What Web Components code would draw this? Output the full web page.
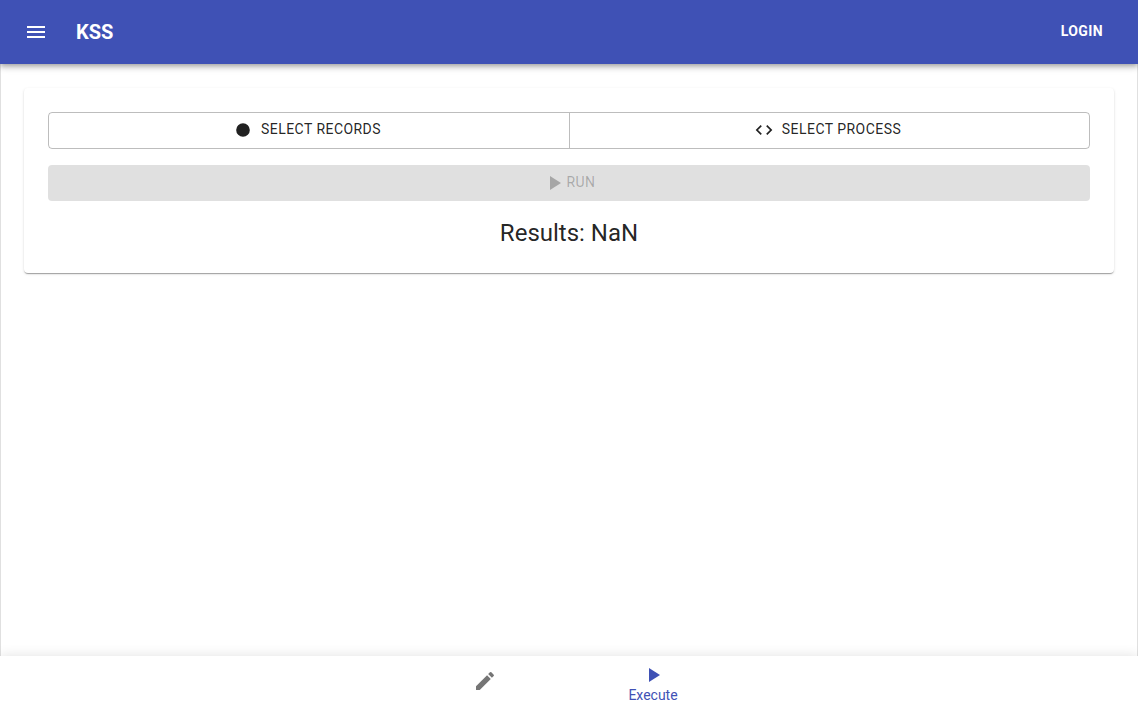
<!DOCTYPE html>
<html lang="en">
<head>
<meta charset="utf-8">
<title>KSS</title>
<style>
html, body { height: 100%; margin: 0; }
body { font-family: Roboto, "Liberation Sans", sans-serif; color: rgba(0,0,0,.87); background: #fff; overflow: hidden; }
</style>
</head>
<body>
<kss-app></kss-app>
<script>
const define = (name, html) => {
  const template = document.createElement('template');
  template.innerHTML = html;
  customElements.define(name, class extends HTMLElement {
    constructor() {
      super();
      this.attachShadow({ mode: 'open' }).append(template.content.cloneNode(true));
    }
  });
};

const icons = {
  menu: 'M3 18h18v-2H3v2zm0-5h18v-2H3v2zm0-7v2h18V6H3z',
  record: 'M12 3.8a8.2 8.2 0 1 0 0 16.4a8.2 8.2 0 1 0 0-16.4z',
  code: 'M9.4 16.6L4.8 12l4.6-4.6L8 6l-6 6 6 6 1.4-1.4zm5.2 0l4.6-4.6-4.6-4.6L16 6l6 6-6 6-1.4-1.4z',
  play: 'M8 5v14l11-7z',
  edit: 'M3 17.25V21h3.75L17.81 9.94l-3.75-3.75L3 17.25zM20.71 7.04c.39-.39.39-1.02 0-1.41l-2.34-2.34a.9959.9959 0 0 0-1.41 0l-1.83 1.83 3.75 3.75 1.83-1.83z'
};
customElements.define('kss-icon', class extends HTMLElement {
  connectedCallback() {
    if (this.shadowRoot) return;
    this.attachShadow({ mode: 'open' }).innerHTML = `
      <style>:host{display:block;flex:none;width:var(--size,24px);height:var(--size,24px)} svg{display:block;width:100%;height:100%;fill:currentColor}</style>
      <svg viewBox="0 0 24 24"><path d="${icons[this.getAttribute('name')]}"/></svg>`;
  }
});

define('kss-header', `
<style>
:host { display: flex; align-items: center; flex: none; height: 64px; box-sizing: border-box; padding: 0 24px; color: #fff; background: #3f51b5; z-index: 2;
  box-shadow: 0 2px 4px -1px rgba(0,0,0,.2), 0 4px 5px 0 rgba(0,0,0,.14), 0 1px 10px 0 rgba(0,0,0,.12); }
h1 { flex: 1; margin: 0 0 0 28px; font: 700 20px/32px Roboto, sans-serif; letter-spacing: 0; }
button { border: 0; background: none; color: inherit; padding: 5px 11px 7px; font: 700 14px/24px Roboto, sans-serif; letter-spacing: .02857em; }
</style>
<kss-icon name="menu"></kss-icon><h1>KSS</h1><button>LOGIN</button>`);

define('kss-button', `
<style>
:host { display: flex; align-items: center; justify-content: center; height: 36px; box-sizing: border-box; font-size: 14px; font-weight: 450; line-height: 24px; letter-spacing: .0325em; }
span { margin-left: var(--gap, 8px); position: relative; top: -1px; }
</style>
<slot name="icon"></slot><span><slot></slot></span>`);

define('kss-group', `
<style>
:host { display: grid; grid-template-columns: 521px 1fr; height: 37px; box-sizing: border-box; border: 1px solid rgba(0,0,0,.26); border-radius: 4px; }
::slotted(*) { height: 35px !important; padding: 0 4px 1px 0; }
::slotted(:first-child) { border-right: 1px solid rgba(0,0,0,.26); }
</style>
<slot></slot>`);

define('kss-card', `
<style>
:host { display: flex; flex-direction: column; gap: 16px; margin: 24px 23px; padding: 24px; border-radius: 4px; background: #fff;
  box-shadow: 0 2px 1px -1px rgba(0,0,0,.2), 0 1px 1px 0 rgba(0,0,0,.14), 0 1px 3px 0 rgba(0,0,0,.12); }
kss-icon { --size: 20px; }
.run { --gap: 0px; border-radius: 4px; color: rgba(0,0,0,.26); background: rgba(0,0,0,.12); }
.run kss-icon { --size: 24px; }
h2 { margin: 0; text-align: center; font-size: 24px; font-weight: 400; line-height: 32px; }
</style>
<kss-group>
  <kss-button><kss-icon slot="icon" name="record"></kss-icon>SELECT RECORDS</kss-button>
  <kss-button><kss-icon slot="icon" name="code"></kss-icon>SELECT PROCESS</kss-button>
</kss-group>
<kss-button class="run"><kss-icon slot="icon" name="play"></kss-icon>RUN</kss-button>
<h2>Results: NaN</h2>`);

define('kss-nav', `
<style>
:host { display: flex; justify-content: center; flex: none; height: 56px; background: #fff; z-index: 1; box-shadow: 0 0 12px rgba(0,0,0,.12); }
div { width: 168px; display: flex; flex-direction: column; align-items: center; box-sizing: border-box; padding-top: 13px; color: rgba(0,0,0,.54); }
.active { padding-top: 7px; color: #3f51b5; font-size: 14px; line-height: 16px; }
</style>
<div><kss-icon name="edit"></kss-icon></div>
<div class="active"><kss-icon name="play"></kss-icon><span>Execute</span></div>`);

define('kss-app', `
<style>
:host { display: flex; flex-direction: column; height: 100vh; }
main { flex: 1; display: flow-root; border: solid #e0e0e0; border-width: 0 1px; }
</style>
<kss-header></kss-header><main><kss-card></kss-card></main><kss-nav></kss-nav>`);
</script>
</body>
</html>
